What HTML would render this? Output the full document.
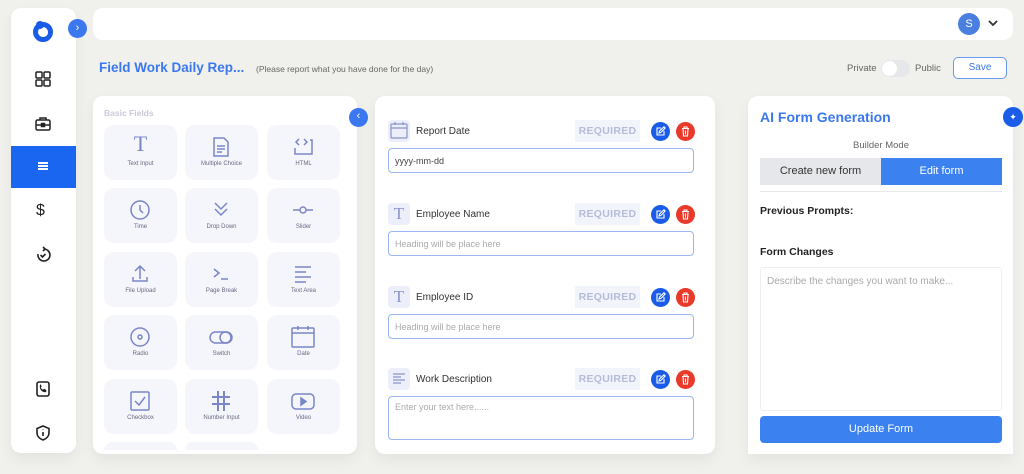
<!DOCTYPE html>
<html><head><meta charset="utf-8"><style>
*{box-sizing:border-box;margin:0;padding:0}
body{width:1024px;height:474px;background:#f0f0ec;font-family:"Liberation Sans",sans-serif;position:relative;overflow:hidden}
.a{position:absolute}
.card{position:absolute;background:#fff;border-radius:10px;box-shadow:0 6px 14px rgba(0,0,0,.06)}
.tile{position:absolute;width:73px;height:55px;background:#f5f5fc;border-radius:10px;text-align:center}
.tile svg{position:absolute;left:24px;top:10px}
.tile span{position:absolute;left:0;right:0;top:36px;font-size:6px;color:#666b80}
.ib{position:absolute;left:388px;width:22px;height:22px;background:#eceefa;border-radius:4px}
.lb{position:absolute;left:416px;font-size:10px;color:#333}
.rq{position:absolute;left:575px;width:65px;height:22px;background:#f2f4fc;color:#b4bcd8;font-weight:bold;font-size:10.5px;text-align:center;line-height:22px;letter-spacing:.3px}
.ed,.dl{position:absolute;width:19px;height:19px;border-radius:50%}
.ed{left:651px;background:#1a5ce8}.dl{left:676px;background:#e8392a}
.ed svg,.dl svg{position:absolute;left:4px;top:4px}
.in{position:absolute;left:388px;width:306px;height:25px;border:1.5px solid #9ab7f3;border-radius:4px;font-size:9px;color:#aaa;padding:7px 6px}
.sic{position:absolute;left:34px}
</style></head><body>
<!-- sidebar -->
<div class="card" style="left:11px;top:8px;width:65px;height:445px"></div>
<svg class="a" style="left:31px;top:19px" width="24" height="24" viewBox="0 0 24 24"><circle cx="12" cy="13" r="7.5" fill="none" stroke="#1a5ce8" stroke-width="5"/><circle cx="9" cy="6" r="4" fill="#1a5ce8"/><circle cx="12.5" cy="13.5" r="4.5" fill="#fff"/></svg>
<div class="a" style="left:68px;top:19px;width:19px;height:19px;border-radius:50%;background:#3b78f0;color:#fff;font-size:11px;text-align:center;line-height:18px">›</div>
<svg class="sic" style="top:70px" width="18" height="18" viewBox="0 0 18 18" fill="none" stroke="#222" stroke-width="1.5"><rect x="2" y="2" width="6" height="6" rx="1"/><rect x="10" y="2" width="6" height="6" rx="1"/><rect x="2" y="10" width="6" height="6" rx="1"/><rect x="10" y="10" width="6" height="6" rx="1"/></svg>
<svg class="sic" style="top:115px" width="18" height="18" viewBox="0 0 18 18" fill="none" stroke="#222" stroke-width="1.5"><rect x="2" y="5" width="14" height="10" rx="1.5"/><path d="M6 5V3h6v2M2 10h14"/><rect x="7.5" y="8.5" width="3" height="3" fill="#222"/></svg>
<div class="a" style="left:11px;top:146px;width:65px;height:42px;background:#1a66f0"></div>
<div class="a" style="left:38px;top:162px;width:10px;height:1.5px;background:#fff;box-shadow:0 3px 0 #fff,0 6px 0 #fff"></div>
<div class="a" style="left:36px;top:202px;font-size:16px;color:#222">$</div>
<svg class="sic" style="top:246px" width="18" height="18" viewBox="0 0 18 18" fill="none" stroke="#222" stroke-width="1.6"><path d="M10 3a6 6 0 1 1-6 5"/><path d="M9 1l2 2-2 2"/><path d="M6.5 9l2 2 3-3"/></svg>
<svg class="sic" style="top:380px" width="18" height="18" viewBox="0 0 18 18" fill="none" stroke="#222" stroke-width="1.6"><rect x="3" y="2" width="12" height="14" rx="2"/><path d="M6 6c0 4 2 6 6 6l0-2-2-1-1 1c-1-.5-2-1.5-2.5-2.5l1-1-1-2z" fill="#222" stroke-width=".5"/></svg>
<svg class="sic" style="top:424px" width="18" height="18" viewBox="0 0 18 18" fill="none" stroke="#222" stroke-width="1.6"><path d="M9 2l6 2.5v4c0 4-3 6.5-6 7.5-3-1-6-3.5-6-7.5v-4z"/><path d="M9 8v4M9 5.5v.5"/></svg>
<!-- top bar -->
<div class="card" style="left:93px;top:8px;width:920px;height:32px;box-shadow:none"></div>
<div class="a" style="left:958px;top:13px;width:22px;height:22px;border-radius:50%;background:#4a7fe0;color:#fff;font-size:11px;text-align:center;line-height:22px">S</div>
<svg class="a" style="left:988px;top:19px" width="10" height="8"><path d="M1 2l4 4 4-4" stroke="#333" stroke-width="1.8" fill="none"/></svg>
<div class="a" style="left:99px;top:60px;font-size:13.5px;font-weight:bold;color:#3b78f0">Field Work Daily Rep...</div>
<div class="a" style="left:256px;top:64px;font-size:8.5px;color:#666">(Please report what you have done for the day)</div>
<div class="a" style="left:847px;top:63px;font-size:9.5px;color:#666">Private</div>
<div class="a" style="left:881px;top:60px;width:29px;height:17px;border-radius:9px;background:#e6e7ea"></div>
<div class="a" style="left:882px;top:61px;width:15px;height:15px;border-radius:50%;background:#fff"></div>
<div class="a" style="left:915px;top:63px;font-size:9.5px;color:#666">Public</div>
<div class="a" style="left:953px;top:57px;width:54px;height:22px;border:1.5px solid #6a9af0;border-radius:5px;background:#fff;color:#3b78f0;font-size:10px;text-align:center;line-height:19px">Save</div>
<!-- left panel -->
<div class="card" style="left:93px;top:96px;width:264px;height:358px"></div>
<div class="a" style="left:104px;top:108px;font-size:8.5px;font-weight:bold;color:#c8cad8">Basic Fields</div>
<div class="a" style="left:349px;top:108px;width:19px;height:19px;border-radius:50%;background:#3b78f0;color:#fff;font-size:11px;text-align:center;line-height:17px">‹</div>
<div class="tile" style="left:104px;top:125px"><div class="a" style="left:0;right:0;top:6px;font-size:22px;color:#7a86c8;font-family:'Liberation Serif',serif">T</div><span>Text Input</span></div>
<div class="tile" style="left:185px;top:125px"><svg width="24" height="24" viewBox="0 0 24 24" fill="none" stroke="#7a86c8" stroke-width="1.5"><path d="M5 3h10l4 4v14H5z"/><path d="M8 11h8M8 14h8M8 17h5"/></svg><span>Multiple Choice</span></div>
<div class="tile" style="left:267px;top:125px"><svg width="24" height="24" viewBox="0 0 24 24" fill="none" stroke="#7a86c8" stroke-width="1.5"><path d="M8 4l-3 3 3 3M13 4l3 3-3 3M4 13v6h17V5h-2"/></svg><span>HTML</span></div>
<div class="tile" style="left:104px;top:188px"><svg width="24" height="24" viewBox="0 0 24 24" fill="none" stroke="#7a86c8" stroke-width="1.5"><circle cx="12" cy="12" r="9"/><path d="M12 7v5l3 3"/></svg><span>Time</span></div>
<div class="tile" style="left:185px;top:188px"><svg width="24" height="24" viewBox="0 0 24 24" fill="none" stroke="#7a86c8" stroke-width="1.5"><path d="M6 5l6 6 6-6M6 11l6 6 6-6"/></svg><span>Drop Down</span></div>
<div class="tile" style="left:267px;top:188px"><svg width="24" height="24" viewBox="0 0 24 24" fill="none" stroke="#7a86c8" stroke-width="1.5"><path d="M2 12h7M15 12h7"/><circle cx="12" cy="12" r="3"/></svg><span>Slider</span></div>
<div class="tile" style="left:104px;top:252px"><svg width="24" height="24" viewBox="0 0 24 24" fill="none" stroke="#7a86c8" stroke-width="1.5"><path d="M12 17V4M7 9l5-5 5 5M5 15v4h14v-4"/></svg><span>File Upload</span></div>
<div class="tile" style="left:185px;top:252px"><svg width="24" height="24" viewBox="0 0 24 24" fill="none" stroke="#7a86c8" stroke-width="1.5"><path d="M5 7l5 4-5 4M12 17h7"/></svg><span>Page Break</span></div>
<div class="tile" style="left:267px;top:252px"><svg width="24" height="24" viewBox="0 0 24 24" fill="none" stroke="#7a86c8" stroke-width="1.5"><path d="M4 5h16M4 10h11M4 15h16M4 20h11"/></svg><span>Text Area</span></div>
<div class="tile" style="left:104px;top:315px"><svg width="24" height="24" viewBox="0 0 24 24" fill="none" stroke="#7a86c8" stroke-width="1.5"><circle cx="12" cy="12" r="9"/><circle cx="12" cy="12" r="2"/></svg><span>Radio</span></div>
<div class="tile" style="left:185px;top:315px"><svg width="24" height="24" viewBox="0 0 24 24" fill="none" stroke="#7a86c8" stroke-width="1.5"><rect x="1" y="7" width="22" height="11" rx="5.5"/><circle cx="16.5" cy="12.5" r="5.5"/></svg><span>Switch</span></div>
<div class="tile" style="left:267px;top:315px"><svg width="24" height="24" viewBox="0 0 24 24" fill="none" stroke="#7a86c8" stroke-width="1.5"><rect x="1" y="3" width="22" height="19" rx="1"/><path d="M1 8h22M7 1v4M17 1v4"/></svg><span>Date</span></div>
<div class="tile" style="left:104px;top:379px"><svg width="24" height="24" viewBox="0 0 24 24" fill="none" stroke="#7a86c8" stroke-width="1.5"><rect x="3" y="3" width="18" height="18" rx="1"/><path d="M7 12l4 4 6-8"/></svg><span>Checkbox</span></div>
<div class="tile" style="left:185px;top:379px"><svg width="24" height="24" viewBox="0 0 24 24" fill="none" stroke="#7a86c8" stroke-width="2"><path d="M9 2v20M15 2v20M3 8h18M3 15h18"/></svg><span>Number Input</span></div>
<div class="tile" style="left:267px;top:379px"><svg width="24" height="24" viewBox="0 0 24 24" fill="none" stroke="#7a86c8" stroke-width="1.5"><rect x="1" y="5" width="22" height="15" rx="4"/><path d="M10 9v7l5-3.5z" fill="#7a86c8"/></svg><span>Video</span></div>
<div class="tile" style="left:104px;top:442px;height:8px;border-radius:10px 10px 0 0"></div>
<div class="tile" style="left:185px;top:442px;height:8px;border-radius:10px 10px 0 0"></div>
<!-- middle -->
<div class="card" style="left:375px;top:96px;width:340px;height:358px"></div>
<div class="ib" style="top:120px"><svg width="22" height="22" viewBox="0 0 22 22" fill="none" stroke="#8a94cc" stroke-width="1.2"><rect x="3" y="4" width="16" height="14" rx="1"/><path d="M3 8h16M7 2v3M15 2v3"/></svg></div>
<div class="lb" style="top:126px">Report Date</div>
<div class="rq" style="top:120px">REQUIRED</div>
<div class="ed" style="top:122px"><svg width="11" height="11" viewBox="0 0 11 11" fill="none" stroke="#fff" stroke-width="1.1"><path d="M6 2H2v7h7V5"/><path d="M4 7l.5-2L9 .8l1.2 1.2L5.8 6.5z"/></svg></div><div class="dl" style="top:122px"><svg width="11" height="11" viewBox="0 0 11 11" fill="none" stroke="#fff" stroke-width="1.1"><path d="M2 2.5h7M4 2.5V1h3v1.5M3 2.5l.5 7.5h4l.5-7.5M5.5 4.5v4"/></svg></div>
<div class="in" style="top:148px;color:#444">yyyy-mm-dd</div>
<div class="ib" style="top:203px;text-align:center;color:#8a94cc;font-family:'Liberation Serif',serif;font-size:17px;line-height:22px">T</div>
<div class="lb" style="top:209px">Employee Name</div>
<div class="rq" style="top:203px">REQUIRED</div>
<div class="ed" style="top:205px"><svg width="11" height="11" viewBox="0 0 11 11" fill="none" stroke="#fff" stroke-width="1.1"><path d="M6 2H2v7h7V5"/><path d="M4 7l.5-2L9 .8l1.2 1.2L5.8 6.5z"/></svg></div><div class="dl" style="top:205px"><svg width="11" height="11" viewBox="0 0 11 11" fill="none" stroke="#fff" stroke-width="1.1"><path d="M2 2.5h7M4 2.5V1h3v1.5M3 2.5l.5 7.5h4l.5-7.5M5.5 4.5v4"/></svg></div>
<div class="in" style="top:231px">Heading will be place here</div>
<div class="ib" style="top:286px;text-align:center;color:#8a94cc;font-family:'Liberation Serif',serif;font-size:17px;line-height:22px">T</div>
<div class="lb" style="top:292px">Employee ID</div>
<div class="rq" style="top:286px">REQUIRED</div>
<div class="ed" style="top:288px"><svg width="11" height="11" viewBox="0 0 11 11" fill="none" stroke="#fff" stroke-width="1.1"><path d="M6 2H2v7h7V5"/><path d="M4 7l.5-2L9 .8l1.2 1.2L5.8 6.5z"/></svg></div><div class="dl" style="top:288px"><svg width="11" height="11" viewBox="0 0 11 11" fill="none" stroke="#fff" stroke-width="1.1"><path d="M2 2.5h7M4 2.5V1h3v1.5M3 2.5l.5 7.5h4l.5-7.5M5.5 4.5v4"/></svg></div>
<div class="in" style="top:314px">Heading will be place here</div>
<div class="ib" style="top:368px"><svg width="22" height="22" viewBox="0 0 22 22" fill="none" stroke="#8a94cc" stroke-width="1.2"><path d="M5 6h12M5 9h8M5 12h12M5 15h8"/></svg></div>
<div class="lb" style="top:374px">Work Description</div>
<div class="rq" style="top:368px">REQUIRED</div>
<div class="ed" style="top:370px"><svg width="11" height="11" viewBox="0 0 11 11" fill="none" stroke="#fff" stroke-width="1.1"><path d="M6 2H2v7h7V5"/><path d="M4 7l.5-2L9 .8l1.2 1.2L5.8 6.5z"/></svg></div><div class="dl" style="top:370px"><svg width="11" height="11" viewBox="0 0 11 11" fill="none" stroke="#fff" stroke-width="1.1"><path d="M2 2.5h7M4 2.5V1h3v1.5M3 2.5l.5 7.5h4l.5-7.5M5.5 4.5v4"/></svg></div>
<div class="in" style="top:396px;height:44px;padding-top:5px">Enter your text here......</div>
<!-- right -->
<div class="card" style="left:748px;top:96px;width:265px;height:358px;border-radius:10px 10px 0 0"></div>
<div class="a" style="left:760px;top:109px;font-size:14px;font-weight:bold;color:#3b78f0">AI Form Generation</div>
<div class="a" style="left:1003px;top:107px;width:20px;height:20px;border-radius:50%;background:#1a5ce8;color:#fff;font-size:9px;text-align:center;line-height:20px">✦</div>
<div class="a" style="left:760px;top:140px;width:242px;text-align:center;font-size:9.5px;color:#666">Builder Mode</div>
<div class="a" style="left:760px;top:158px;width:121px;height:27px;background:#e6e7ea;font-size:11px;color:#333;text-align:center;line-height:27px">Create new form</div>
<div class="a" style="left:881px;top:158px;width:121px;height:27px;background:#3b82f0;font-size:11px;color:#fff;text-align:center;line-height:27px">Edit form</div>
<div class="a" style="left:760px;top:191px;width:242px;height:1px;background:#e8e8ea"></div>
<div class="a" style="left:760px;top:205px;font-size:10.5px;font-weight:bold;color:#222">Previous Prompts:</div>
<div class="a" style="left:760px;top:246px;font-size:10.5px;font-weight:bold;color:#222">Form Changes</div>
<div class="a" style="left:760px;top:267px;width:242px;height:144px;border:1px solid #eceef0;border-radius:3px;font-size:10px;color:#aaa;padding:8px 6px">Describe the changes you want to make...</div>
<div class="a" style="left:760px;top:416px;width:242px;height:27px;background:#3b82f0;border-radius:4px;color:#fff;font-size:11px;text-align:center;line-height:27px">Update Form</div>
</body></html>
